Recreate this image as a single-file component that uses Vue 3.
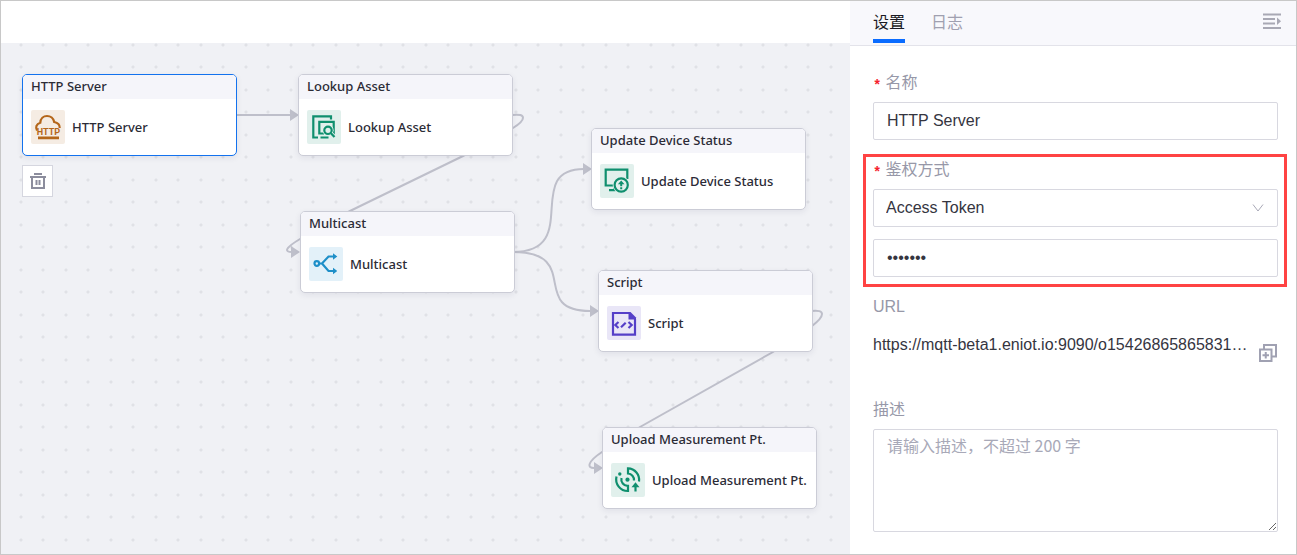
<script setup>
import { ref } from 'vue'

const nodes = [
  { id: 'http', title: 'HTTP Server', x: 21, y: 31, tone: 'orange', selected: true },
  { id: 'lookup', title: 'Lookup Asset', x: 297, y: 31, tone: 'green' },
  { id: 'multicast', title: 'Multicast', x: 299, y: 168, tone: 'blue' },
  { id: 'update', title: 'Update Device Status', x: 590, y: 85, tone: 'green' },
  { id: 'script', title: 'Script', x: 597, y: 227, tone: 'purple' },
  { id: 'upload', title: 'Upload Measurement Pt.', x: 601, y: 384, tone: 'green' },
]

const edges = [
  'M235 72H290',
  'M511 72C526 70 525 77 512 85L462 113L349 168L299 196C284 205 283 209 291 209',
  'M512 209C582 209 521 126 583 126',
  'M512 209C582 209 527 268 589 268',
  'M810 268C825 266 824 273 811 283L772 309L639 384L601 409C586 419 586 425 593 425',
]

const arrows = [
  [298, 72],
  [299, 209],
  [591, 126],
  [598, 268],
  [602, 425],
]

const name = ref('HTTP Server')
const auth = ref('Access Token')
const token = ref('1234567')
const description = ref('')
</script>

<template>
  <div class="app">
    <main class="editor">
      <div class="toolbar"></div>
      <div class="canvas">
        <svg class="edges" width="848" height="511" aria-hidden="true">
          <path v-for="d in edges" :key="d" class="edge" :d="d" />
          <path v-for="[x, y] in arrows" :key="x" class="arrow" :d="`M${x} ${y}l-9 -6v12z`" />
        </svg>

        <section
          v-for="n in nodes"
          :key="n.id"
          class="node"
          :class="{ selected: n.selected }"
          :style="{ left: n.x + 'px', top: n.y + 'px' }"
        >
          <header class="node-head">{{ n.title }}</header>
          <div class="node-body">
            <svg class="node-icon" :class="n.tone" viewBox="0 0 34 34" aria-hidden="true">
              <g v-if="n.id === 'http'">
                <path d="M6 20.5C4.3 17.500 5.200 13.700 9.300 12.700C9.500 8.500 12.500 6 16 6C19.600 6 22.500 8.500 23.200 12C27 12.700 28.900 15 28.700 18" />
                <text x="17.500" y="25" text-anchor="middle">HTTP</text>
                <path class="solid" d="M7 26.500H28V29.300H7z" />
              </g>
              <g v-else-if="n.id === 'lookup'">
                <path d="M24 9.500V6.300H6.300V27.500H11M13.500 27.500H21.500M17 23.500H12.300V11.800H26.700V27" />
                <circle class="halo" cx="21" cy="20.300" r="5.600" />
                <circle cx="21" cy="20.300" r="3.700" />
                <path class="halo-line" d="M24 23.500L28 27.500" />
                <path d="M23.700 23L27.500 27" />
              </g>
              <g v-else-if="n.id === 'multicast'">
                <circle cx="7.800" cy="16.500" r="2.300" />
                <path d="M10.300 16.500H13L19.500 9.500H26M13 16.500L19.500 24H26" />
                <path class="solid" d="M24 6.200L28.300 9.500L24 12.800zM24 20.700L28.300 24L24 27.300z" />
              </g>
              <g v-else-if="n.id === 'update'">
                <path d="M14 21.500H5.700V5.700H27.300V15M9 26.200H15.500M14.500 22V26" />
                <circle class="halo" cx="21.200" cy="21" r="8.500" />
                <circle cx="21.200" cy="21" r="6.600" />
                <path class="solid" d="M21.200 16.500L24.500 20.200H22.200V22.300H20.200V20.200H17.900zM20.200 23.300H22.200V25.200H20.200z" />
              </g>
              <g v-else-if="n.id === 'script'">
                <path d="M22 7H6V28.700H28V13" />
                <path class="solid" d="M21.500 6H23.500L29 11.500V13.500H21.500z" />
                <path d="M11.500 16L8.300 19L11.500 22M21.500 16L24.700 19L21.500 22M18.700 16.700L14 21.300" />
              </g>
              <g v-else>
                <circle class="solid" cx="16.500" cy="16.700" r="2.100" />
                <circle class="solid" cx="8.800" cy="11" r="1.700" />
                <path d="M28 18.500A11.500 11.500 0 0 0 17 5.300V10.500A6.500 6.500 0 0 1 23 17.500M5.500 13.500A11.700 11.700 0 0 0 17 28V22.800A6.300 6.300 0 0 1 10.500 15" />
                <path d="M24.500 28.500V22" />
                <path class="solid" d="M24.500 19.200L28.500 24.200H20.500z" />
              </g>
            </svg>
            <span>{{ n.title }}</span>
          </div>
        </section>

        <button class="trash" type="button" aria-label="删除">
          <svg viewBox="0 0 18 18" width="18" height="18" aria-hidden="true">
            <path d="M5 2H13M1 5H17M3 5V16H15V5M7.500 8V13M10.500 8V13" />
          </svg>
        </button>
      </div>
    </main>

    <aside class="panel">
      <nav class="tabs">
        <button class="tab active" type="button">设置</button>
        <button class="tab" type="button">日志</button>
        <button class="collapse" type="button" aria-label="收起">
          <svg viewBox="0 0 18 18" width="18" height="18" aria-hidden="true">
            <path d="M0 2.500H18M0 7H12M0 11.500H12M0 16H18" />
            <path class="tip" d="M14 5.500L18 9.200L14 13z" />
          </svg>
        </button>
      </nav>

      <form class="form" @submit.prevent>
        <div class="field">
          <label class="required" for="name">名称</label>
          <input id="name" v-model="name" class="control" type="text" />
        </div>

        <div class="field highlight">
          <label class="required" for="auth">鉴权方式</label>
          <div class="select">
            <select id="auth" v-model="auth" class="control">
              <option>Access Token</option>
            </select>
            <svg viewBox="0 0 12 8" width="12" height="8" aria-hidden="true"><path d="M1 0.500L6 7L11 0.500" /></svg>
          </div>
          <input v-model="token" class="control secret" type="password" aria-label="Access Token" autocomplete="off" />
        </div>

        <div class="field url">
          <span class="caption">URL</span>
          <div class="url-row">
            <span class="url-text">https://mqtt-beta1.eniot.io:9090/o15426865865831…</span>
            <button class="copy" type="button" aria-label="复制">
              <svg viewBox="0 0 20 20" width="20" height="20" aria-hidden="true">
                <path d="M6 6V2H18V13.500H14M2 6.500H13.500V18H2zM4.500 12.200H11M7.750 9V15.500" />
              </svg>
            </button>
          </div>
        </div>

        <div class="field">
          <label for="description">描述</label>
          <textarea id="description" v-model="description" class="control" placeholder="请输入描述，不超过 200 字"></textarea>
        </div>
      </form>
    </aside>
  </div>
</template>

<style>
body {
  margin: 0;
}
</style>

<style scoped>
* {
  box-sizing: border-box;
}

button {
  padding: 0;
  border: 0;
  background: none;
  font: inherit;
  cursor: pointer;
}

svg {
  display: block;
}

.app {
  display: flex;
  min-height: 100vh;
  border: 1px solid #c8c8c8;
  background: #fff;
  font-family: "Liberation Sans", "Noto Sans CJK SC", sans-serif;
  font-size: 16px;
  line-height: 24px;
  color: #35353f;
}

.editor {
  display: flex;
  flex: 1;
  flex-direction: column;
  min-width: 0;
}

.toolbar {
  height: 42px;
  background: #fff;
}

.canvas {
  position: relative;
  flex: 1;
  overflow: hidden;
  background-color: #f0f1f5;
  background-image:
    radial-gradient(circle at 20px 2px, #e0e1e6 1px, transparent 2px),
    radial-gradient(circle at 42px 2px, #e0e1e6 1px, transparent 2px),
    radial-gradient(circle at 20px 24px, #e0e1e6 1px, transparent 2px),
    radial-gradient(circle at 42px 24px, #e0e1e6 1px, transparent 2px);
  background-size: 45px 45px;
}

.edges {
  position: absolute;
  top: 0;
  left: 0;
}

.edge {
  fill: none;
  stroke: #bebfca;
  stroke-width: 2;
}

.arrow {
  fill: #bebfca;
}

.node {
  position: absolute;
  width: 215px;
  overflow: hidden;
  border: 1px solid #cbccd6;
  border-radius: 5px;
  background: #fff;
  box-shadow: 0 2px 6px rgba(40, 40, 80, 0.08);
  font: 500 13px/22px "Noto Sans", sans-serif;
  color: #2b2b36;
}

.node.selected {
  border-color: #1372ee;
}

.node-head {
  padding: 0 8px 2px;
  background: #f5f5fa;
}

.node-body {
  display: flex;
  align-items: center;
  gap: 7px;
  height: 56px;
  padding: 0 8px;
}

.node-icon {
  width: 34px;
  height: 34px;
  border-radius: 2px;
  fill: none;
  stroke: var(--ink);
  stroke-width: 2.2;
  background: var(--tint);
}

.node-icon text {
  fill: var(--ink);
  stroke: none;
  font: 700 9px Roboto, sans-serif;
}

.node-icon .solid {
  fill: var(--ink);
  stroke: none;
}

.node-icon .halo {
  fill: var(--tint);
  stroke: none;
}

.node-icon .halo-line {
  stroke: var(--tint);
  stroke-width: 4;
}

.orange {
  --ink: #b4661a;
  --tint: #f5ece3;
}

.green {
  --ink: #0f8f6e;
  --tint: #e1f0ec;
}

.blue {
  --ink: #1e8fc8;
  --tint: #e3f1f9;
}

.purple {
  --ink: #553fc8;
  --tint: #e9e6f7;
}

.trash {
  position: absolute;
  top: 122px;
  left: 21px;
  display: grid;
  place-items: center;
  width: 31px;
  height: 32px;
  border: 1px solid #d5d6df;
  background: #fff;
}

.trash path,
.collapse path,
.copy path {
  fill: none;
  stroke: #8c8d9d;
  stroke-width: 2;
}

.panel {
  width: 446px;
  background: #fff;
}

.tabs {
  display: flex;
  gap: 26px;
  height: 45px;
  padding: 0 15px 0 23px;
  border-bottom: 1px solid #e3e3ea;
  background: #f8f8fc;
}

.tab {
  height: 42px;
  border-bottom: 4px solid transparent;
  padding-top: 6px;
  color: #a0a0b0;
}

.tab.active {
  border-color: #0a6cff;
  color: #1b1b24;
}

.collapse {
  margin-left: auto;
  height: 40px;
}

.collapse path {
  stroke: #a8a8b4;
}

.collapse .tip {
  fill: #a8a8b4;
  stroke: none;
}

.form {
  padding: 24px 18px 22px 23px;
}

.field {
  display: flex;
  flex-direction: column;
  gap: 8px;
}

label,
.caption {
  height: 24px;
  padding-top: 1px;
  color: #9798a8;
}

.required::before {
  content: "*";
  margin-right: 4px;
  font: 700 14px/16px "Liberation Mono", monospace;
  vertical-align: -2px;
  color: #f5222d;
}

.control {
  display: block;
  width: 100%;
  height: 38px;
  margin: 0;
  padding: 0 13px;
  border: 1px solid #d8d8e0;
  border-radius: 2px;
  outline: none;
  background: #fff;
  font: inherit;
  color: #35353f;
}

.highlight {
  margin: 14px -9px 7px -10px;
  padding: 0 6px 7px 7px;
  border: 3px solid #ff4343;
}

.select {
  position: relative;
}

.select .control {
  appearance: none;
  padding: 0 12px;
}

.select svg {
  position: absolute;
  top: 15px;
  right: 14px;
  fill: none;
  stroke: #a8a8b6;
  pointer-events: none;
}

.secret {
  margin-top: 4px;
}

.url {
  gap: 15px;
  margin-bottom: 34px;
}

.url-row {
  display: flex;
  justify-content: space-between;
  height: 30px;
}

.url-text {
  overflow: hidden;
  white-space: nowrap;
}

.copy {
  align-self: flex-end;
}

.copy path {
  stroke: #a0a1b2;
}

textarea.control {
  height: 103px;
  padding: 3px 13px;
  resize: vertical;
}

textarea::placeholder {
  color: #a8a9b8;
  font-family: "Noto Sans CJK SC", sans-serif;
}
</style>
